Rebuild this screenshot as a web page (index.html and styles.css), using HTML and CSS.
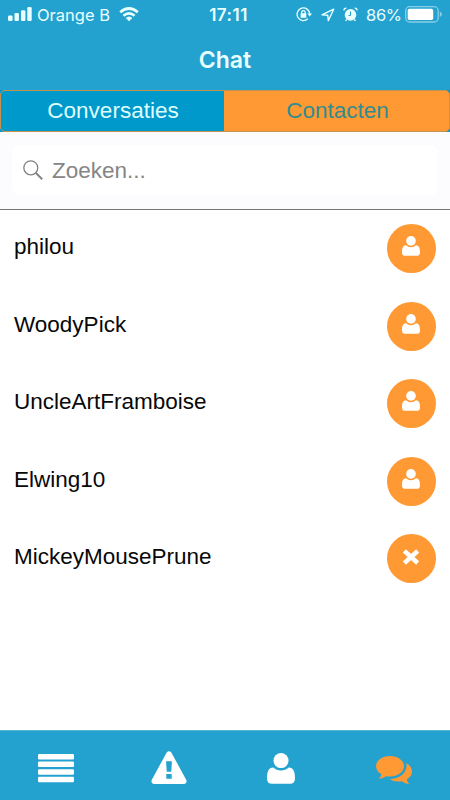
FILE: index.html
```html
<!DOCTYPE html>
<html lang="nl">
<head>
<meta charset="utf-8">
<title>Chat</title>
<link rel="stylesheet" href="styles.css">
</head>
<body>
<svg class="defs" aria-hidden="true">
  <symbol id="user" viewBox="0 0 28 31">
    <circle cx="14" cy="7.6" r="7.5"/>
    <path d="M6.3 14.4C8.5 16.3 11 17.4 14 17.4S19.500 16.300 21.700 14.400C26.600 14.400 28 19 28 25.500C28 29 26.300 30.700 23 30.700H5C1.700 30.700 0 29 0 25.500C0 19 1.400 14.400 6.300 14.400Z"/>
  </symbol>
</svg>
<div class="app">
  <header class="header">
    <div class="status">
      <div class="status-side">
        <svg class="signal" width="24" height="15" viewBox="0 0 24 15"><rect x="0" y="8.500" width="4.600" height="5.500" rx="1.200"/><rect x="6.500" y="6" width="4.400" height="8" rx="1.200"/><rect x="13" y="3.200" width="4.400" height="10.800" rx="1.200"/><rect x="19.300" y="0" width="4.400" height="14" rx="1.200"/></svg>
        <span class="carrier">Orange B</span>
        <svg width="20" height="15" viewBox="0 0 20 15"><g fill="none" stroke="#eaffff" stroke-width="2.700"><path d="M1.200 5.200Q10-2.200 18.800 5.200"/><path d="M4.400 8.700Q10 3.900 15.600 8.700"/></g><path d="M6.700 11Q10 8 13.300 11L10 14.300Z"/></svg>
      </div>
      <time class="clock">17:11</time>
      <div class="status-side status-right">
        <svg width="17" height="15" viewBox="0 0 17 15"><g fill="none" stroke="#eaffff" stroke-width="1.300"><path d="M13.700 7A6.300 6.300 0 1 0 11.800 11.800"/><path d="M5.700 7V5.300Q5.700 3.600 7.400 3.600T9.100 5.300V7"/></g><rect x="4.600" y="6.300" width="5.700" height="4.500" rx=".6"/><path d="M11.400 6.500H16L13.700 9.500Z"/></svg>
        <svg class="arrow" width="14" height="14" viewBox="0 0 14 14"><path d="M1 6.900L12.700 1.200L7.300 12.700L6.800 7.300Z" fill="none" stroke="#eaffff" stroke-width="1.400" stroke-linejoin="round"/></svg>
        <svg class="alarm" width="15" height="15" viewBox="0 0 15 15"><circle cx="7.500" cy="7.900" r="5.800"/><path d="M.7 3.400Q1 1.300 3.300 1M14.300 3.400Q14 1.300 11.700 1M3.700 12.500L2.600 13.900M11.300 12.500L12.400 13.900" fill="none" stroke="#eaffff" stroke-width="1.400"/><path d="M7.500 4.500V8.500H5.500" fill="none" stroke="#24a2cf" stroke-width="1"/></svg>
        <span class="percent">86%</span>
        <svg class="battery" width="38" height="17" viewBox="0 0 38 17"><rect class="battery-shell" x=".7" y=".7" width="32.500" height="15.300" rx="4"/><rect class="battery-level" x="2.700" y="2.700" width="25.500" height="11.300" rx="1.800"/><path class="battery-tip" d="M34.800 5.500Q37 6.500 37 8.300T34.800 11.100Z"/></svg>
      </div>
    </div>
    <h1 class="title">Chat</h1>
  </header>
  <nav class="tabs">
    <div class="tab-group">
      <a class="tab">Conversaties</a>
      <a class="tab tab-active">Contacten</a>
    </div>
  </nav>
  <div class="search">
    <div class="search-field">
      <svg class="lens" width="20" height="20" viewBox="0 0 20 20"><circle cx="7.800" cy="7.800" r="7" stroke-width="1.300"/><path d="M12.700 12.700L19.200 19.200" stroke-width="2"/></svg>
      <span class="placeholder">Zoeken...</span>
    </div>
  </div>
  <main class="contacts">
    <div class="contact"><span class="name">philou</span><span class="badge"><svg class="person"><use href="#user"/></svg></span></div>
    <div class="contact"><span class="name">WoodyPick</span><span class="badge"><svg class="person"><use href="#user"/></svg></span></div>
    <div class="contact"><span class="name">UncleArtFramboise</span><span class="badge"><svg class="person"><use href="#user"/></svg></span></div>
    <div class="contact"><span class="name">Elwing10</span><span class="badge"><svg class="person"><use href="#user"/></svg></span></div>
    <div class="contact"><span class="name">MickeyMousePrune</span><span class="badge"><svg class="cross" viewBox="0 0 16 16"><path d="M3 3.500L13 12.500M13 3.500L3 12.500" stroke="#fff" stroke-width="4.500" stroke-linecap="square"/></svg></span></div>
  </main>
  <footer class="toolbar">
    <div class="tool"><svg width="36" height="31" viewBox="0 0 36 31"><rect y="2" width="36" height="5.500" rx="1.200"/><rect y="9.600" width="36" height="5.500" rx="1.200"/><rect y="17.200" width="36" height="5.500" rx="1.200"/><rect y="24.800" width="36" height="5.500" rx="1.200"/></svg></div>
    <div class="tool"><svg class="warning" width="36" height="33" viewBox="0 0 36 33"><path fill-rule="evenodd" d="M15.700 1.400Q18-1 20.300 1.400L35.300 29Q36.400 32.600 33 33H3Q-.4 32.600.7 29ZM15.100 10.300L15.700 20.700H20.300L20.900 10.300ZM15.300 23V27.800H20.700V23Z"/></svg></div>
    <div class="tool"><svg class="tool-person" width="28" height="31"><use href="#user"/></svg></div>
    <div class="tool"><svg class="chat" width="36" height="29" viewBox="0 0 36 29"><path d="M14 0C21.800 0 28 4.600 28 10.300S21.800 20.600 14 20.600Q12 20.600 10.100 20.200Q7.100 22.500 2.700 23Q4.900 21 5.500 18.300C2 16.400 0 13.500 0 10.300C0 4.600 6.300 0 14 0Z"/><path d="M30.200 7.300C34 9.200 36 12.200 36 15.400Q36 20 30.800 23.200Q31.300 26 33.300 28Q28.800 27.600 25.900 25.200Q18.500 26.400 13.600 22.900C22.500 23 29.500 18.200 30.500 11Q30.700 9 30.200 7.300Z"/></svg></div>
  </footer>
</div>
</body>
</html>
```
FILE: styles.css
```css
* { box-sizing: border-box; }
body { margin: 0; background: #fff; font-family: "Liberation Sans", Arial, sans-serif; }
svg { display: block; flex: none; fill: #eaffff; }
.defs { display: none; }
.app { width: 450px; height: 800px; display: flex; flex-direction: column; overflow: hidden; }
.header { height: 90px; background: #24a2cf; color: #eaffff; flex: none; }
.status { height: 29px; display: flex; align-items: center; padding: 0 8px; font-family: Inter, sans-serif; font-size: 16.500px; }
.status-side { flex: 1; display: flex; align-items: center; }
.signal { margin-right: 5px; }
.carrier { width: 82px; white-space: nowrap; }
.clock { width: 46px; text-align: center; font-weight: 600; font-size: 17px; letter-spacing: .5px; margin-left: 7px; }
.status-right { justify-content: flex-end; }
.arrow { margin-left: 8px; }
.alarm { margin-left: 8px; }
.percent { width: 37px; margin-left: 8px; white-space: nowrap; letter-spacing: -.3px; }
.battery { margin-left: 2px; margin-right: -1px; }
.battery-shell { fill: none; stroke: #86cee5; stroke-width: 1.300px; }
.battery-level { fill: #fff; }
.battery-tip { fill: #86cee5; }
.title { margin: 14px 0 0; font: 600 23px/34px Inter, sans-serif; text-align: center; }
.tabs { height: 42px; flex: none; background: #0e96c3; }
.tab-group { height: 41.500px; display: flex; border: 1.500px solid #c59350; border-radius: 5px; overflow: hidden; background: #ff9933; }
.tab { flex: none; width: 223px; padding-left: 1px; text-align: center; font-size: 22.500px; line-height: 39px; background: #0099cc; color: #dfffff; }
.tab-active { flex: 1; width: auto; padding-left: 2px; background: #ff9933; color: #318c90; }
.search { height: 78px; flex: none; background: #fcfcfe; border-bottom: 1px solid #777; padding: 13px 12px 14px; }
.search-field { height: 50px; background: #fff; border-radius: 8px; display: flex; align-items: center; padding-left: 11px; gap: 9px; }
.lens { fill: none; stroke: #828282; }
.placeholder { font-size: 22.500px; color: #858585; padding-top: 1px; }
.contacts { flex: 1; }
.contact { height: 77.500px; display: flex; justify-content: space-between; align-items: center; padding: 0 14px; }
.name { font-size: 22.500px; color: #080808; padding-bottom: 3px; }
.badge { width: 49px; height: 49px; border-radius: 50%; background: #ff9933; display: flex; align-items: center; justify-content: center; }
.person { width: 18px; height: 20px; margin: -5px 1px 0 0; fill: #fff; }
.cross { width: 16px; height: 16px; margin: -3px 1px 0 0; }
.toolbar { height: 70px; flex: none; background: #24a2cf; border-top: 1px solid #59b4cf; display: flex; }
.tool { flex: 1; display: flex; justify-content: center; align-items: center; padding-top: 4px; }
.tool svg { fill: #fff; }
.tool .tool-person { margin-top: 2px; }
.tool .chat { fill: #ff9933; margin-top: 6px; }
```
